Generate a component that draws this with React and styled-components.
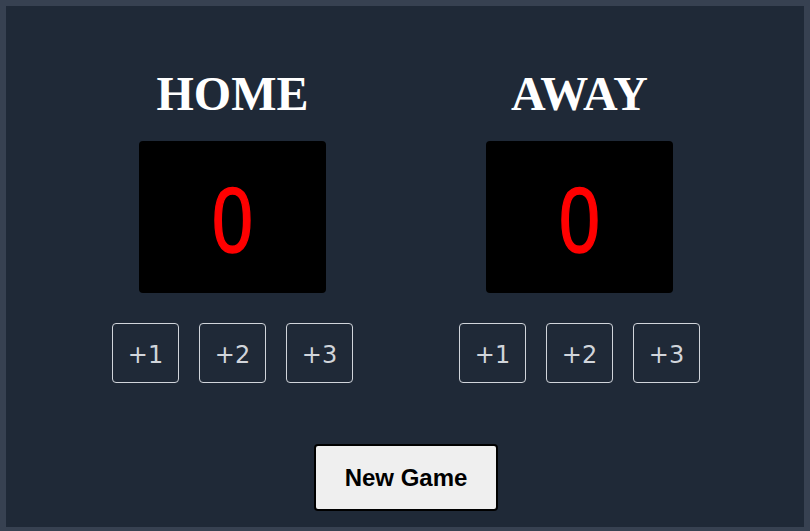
import styled, { createGlobalStyle } from 'styled-components';

const GlobalStyle = createGlobalStyle`
    body {
        margin: 0;
        background: #1f2937;
    }
`;

const teams = ['HOME', 'AWAY'];
const points = [1, 2, 3];

const App = () => {
    return(
        <>
            <GlobalStyle />
            <Board>
                <Teams>
                    {teams.map((team) => (
                        <Team key={team}>
                            <Title>{team}</Title>
                            <Score>
                                <Digit>0</Digit>
                            </Score>
                            <Buttons>
                                {points.map((p) => (
                                    <AddButton key={p}>+{p}</AddButton>
                                ))}
                            </Buttons>
                        </Team>
                    ))}
                </Teams>
                <NewGame>New Game</NewGame>
            </Board>
        </>
    );
};

const Board = styled.div`
    box-sizing: border-box;
    width: 100%;
    border: 6px solid #374151;
    background: #1f2937;
    padding: 60px 0 16px 2px;
    display: flex;
    flex-direction: column;
    align-items: center;
`;

const Teams = styled.div`
    display: flex;
    justify-content: center;
    gap: 106px;
`;

const Team = styled.div`
    width: 241px;
    display: flex;
    flex-direction: column;
    align-items: center;
`;

const Title = styled.h1`
    margin: 0 0 20px 0;
    font-family: "Liberation Serif", serif;
    font-size: 48px;
    font-weight: 700;
    color: #ffffff;
    line-height: normal;
`;

const Score = styled.div`
    width: 187px;
    height: 152px;
    background: #000000;
    border-radius: 4px;
    display: flex;
    justify-content: center;
    align-items: center;
    margin-bottom: 30px;
`;

const Digit = styled.span`
    font-family: "Liberation Sans", sans-serif;
    font-size: 92px;
    line-height: 1;
    color: #ff0000;
    -webkit-text-stroke: 1.5px #ff0000;
    transform: translateY(3px) scaleX(0.8);
`;

const Buttons = styled.div`
    display: flex;
    gap: 20px;
`;

const AddButton = styled.button`
    width: 67px;
    height: 60px;
    background: transparent;
    border: 1px solid #d1d5db;
    border-radius: 4px;
    color: #d1d5db;
    font-family: "DejaVu Sans", sans-serif;
    font-size: 24px;
    padding: 3px 0 0 0;
    cursor: pointer;
`;

const NewGame = styled.button`
    margin-top: 61px;
    width: 184px;
    height: 67px;
    background: #efefef;
    border: 2px solid #000000;
    border-radius: 4px;
    color: #000000;
    font-family: "Liberation Sans", Arial, sans-serif;
    font-size: 24px;
    font-weight: 700;
    padding: 0;
    cursor: pointer;
`;

export default App;
